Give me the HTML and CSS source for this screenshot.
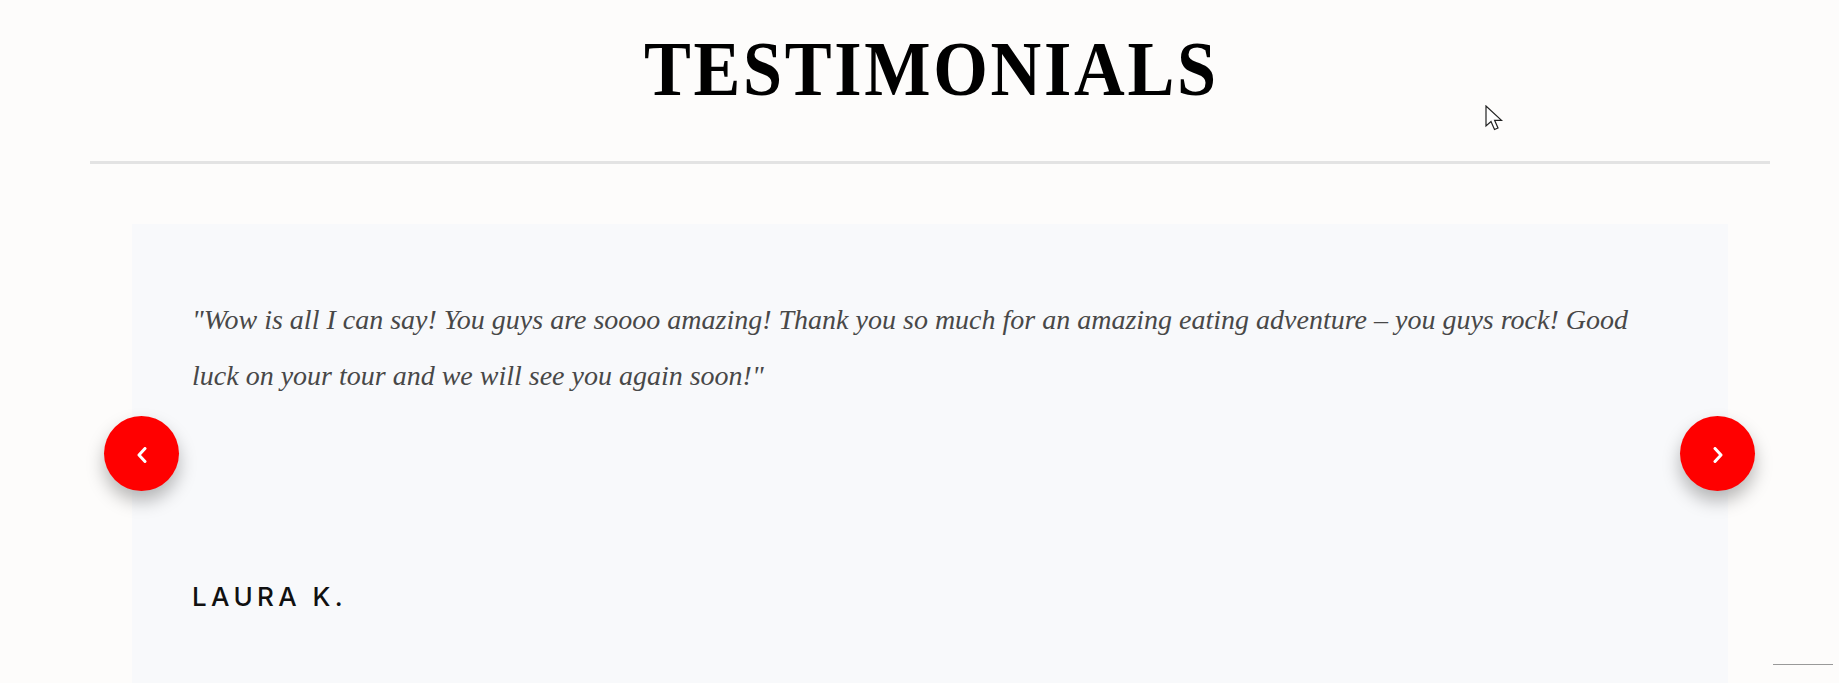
FILE: index.html
```html
<!DOCTYPE html>
<html lang="en">
<head>
<meta charset="utf-8">
<title>Testimonials</title>
<link rel="stylesheet" href="styles.css">
</head>
<body>
<main class="page">
  <h1 class="title">TESTIMONIALS</h1>
  <div class="rule"></div>
  <section class="card">
    <p class="quote">"Wow is all I can say! You guys are soooo amazing! Thank you so much for an amazing eating adventure – you guys rock! Good luck on your tour and we will see you again soon!"</p>
    <p class="name">LAURA K.</p>
    <button class="nav nav-prev" aria-label="Previous">
      <svg width="12" height="16" viewBox="0 0 12 16"><polyline points="9,1.5 3,8 9,14.5" fill="none" stroke="#fff" stroke-width="3" stroke-linecap="round" stroke-linejoin="round"/></svg>
    </button>
    <button class="nav nav-next" aria-label="Next">
      <svg width="12" height="16" viewBox="0 0 12 16"><polyline points="3,1.5 9,8 3,14.5" fill="none" stroke="#fff" stroke-width="3" stroke-linecap="round" stroke-linejoin="round"/></svg>
    </button>
  </section>
</main>
<svg class="cursor" width="20" height="28" viewBox="0 0 20 28">
  <path d="M1 1 L1 21 L6 16.5 L9.5 24.5 L13 23 L9.6 15.3 L16.5 15.3 Z" fill="#fff" stroke="#222" stroke-width="1.2" stroke-linejoin="miter"/>
</svg>
<div class="corner-line"></div>
</body>
</html>
```

FILE: styles.css
```css
html, body {
  margin: 0;
  padding: 0;
}
body {
  background: #fdfcfb;
  overflow: hidden;
  height: 683px;
  position: relative;
}
.page {
  padding: 0 69px 0 90px;
}
.title {
  margin: 0;
  padding-top: 29px;
  padding-left: 3px;
  font-family: "Liberation Serif", "Times New Roman", serif;
  font-weight: 700;
  font-size: 78px;
  line-height: 80px;
  letter-spacing: 3px;
  color: #000;
  text-align: center;
  transform: scaleX(0.9);
}
.rule {
  margin-top: 52px;
  height: 3px;
  background: #e3e3e3;
}
.card {
  position: relative;
  margin: 60px 42px 0;
  padding: 68px 60px 120px;
  background: #f8f9fb;
}
.quote {
  margin: 0;
  font-family: "Liberation Serif", "Times New Roman", serif;
  font-style: italic;
  font-size: 28px;
  line-height: 56px;
  color: #484848;
}
.name {
  margin: 177px 0 0;
  font-family: Inter, "Liberation Sans", sans-serif;
  font-weight: 500;
  font-size: 26px;
  line-height: 32px;
  letter-spacing: 4.4px;
  color: #111;
}
.nav {
  position: absolute;
  top: 192px;
  width: 75px;
  height: 75px;
  border: 0;
  padding: 0;
  border-radius: 50%;
  background: #ff0000;
  box-shadow: 0 10px 18px rgba(0, 0, 0, 0.28);
  display: flex;
  align-items: center;
  justify-content: center;
  cursor: pointer;
}
.nav svg {
  display: block;
  margin-top: 3px;
}
.nav-prev {
  left: -28px;
}
.nav-next {
  right: -27px;
}
.cursor {
  position: absolute;
  left: 1485px;
  top: 105px;
}
.corner-line {
  position: absolute;
  left: 1773px;
  top: 664px;
  width: 60px;
  height: 1px;
  background: #999;
}
```
